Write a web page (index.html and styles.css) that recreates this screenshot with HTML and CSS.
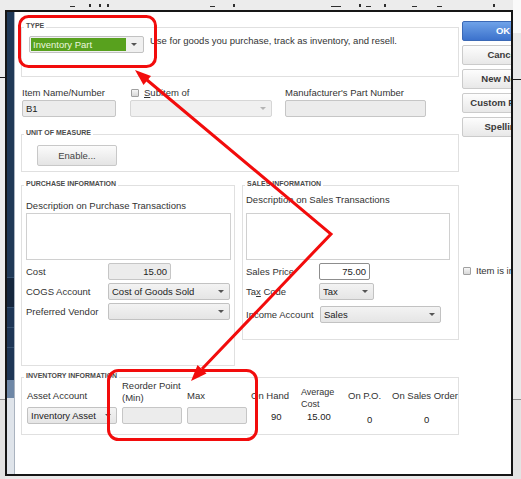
FILE: index.html
```html
<!DOCTYPE html>
<html lang="en">
<head>
  <meta charset="UTF-8" />
  <meta name="viewport" content="width=device-width, initial-scale=1.0"/>
  <title>Edit Item</title>
  <link rel="stylesheet" href="styles.css">
</head>
<body>
  <div class="screen">
    <!-- bits of the window behind, cut off at the top -->
    <div class="edge-top">
      <i class="u"></i><i class="c"></i><i class="c"></i><i class="c"></i><i class="u"></i><i class="c"></i><i class="u wide"></i><i class="c"></i><i class="u"></i><i class="c"></i><i class="u"></i><i class="u"></i><i class="c"></i>
    </div>
    <div class="edge-left"></div>

    <div class="frame">
      <div class="nav-strip"></div>
      <div class="dialog">
        <div class="form">

          <fieldset class="group group-type">
            <legend>TYPE</legend>
            <div class="type-row">
              <div class="combo combo-type"><span class="combo-value">Inventory Part</span><span class="combo-arrow"></span></div>
              <p class="type-desc">Use for goods you purchase, track as inventory, and resell.</p>
            </div>
          </fieldset>

          <div class="item-row">
            <div class="col-name">
              <div class="cap">Item Name/Number</div>
              <div class="input">B1</div>
            </div>
            <div class="col-sub">
              <div class="cap"><span class="check"></span><u>S</u>ubitem of</div>
              <div class="combo is-disabled"><span class="combo-value"></span><span class="combo-arrow"></span></div>
            </div>
            <div class="col-mpn">
              <div class="cap">Manufacturer's Part Number</div>
              <div class="input"></div>
            </div>
          </div>

          <fieldset class="group group-uom">
            <legend>UNIT OF MEASURE</legend>
            <button class="plain-btn">Enable...</button>
          </fieldset>

          <div class="info-row">
            <fieldset class="group group-purchase">
              <legend>PURCHASE INFORMATION</legend>
              <div class="desc-cap">Description on Purchase Transactions</div>
              <div class="textbox"></div>
              <div class="frow">
                <span class="flabel">Cost</span>
                <div class="input num w-cost">15.00</div>
              </div>
              <div class="frow">
                <span class="flabel">COGS Account</span>
                <div class="combo w-cogs"><span class="combo-value">Cost of Goods Sold</span><span class="combo-arrow"></span></div>
              </div>
              <div class="frow">
                <span class="flabel">Preferred Vendor</span>
                <div class="combo w-vendor"><span class="combo-value"></span><span class="combo-arrow"></span></div>
              </div>
            </fieldset>

            <fieldset class="group group-sales">
              <legend>SALES INFORMATION</legend>
              <div class="desc-cap">Description on Sales Transactions</div>
              <div class="textbox"></div>
              <div class="frow">
                <span class="flabel">Sales Price</span>
                <div class="input num plain w-price">75.00</div>
              </div>
              <div class="frow">
                <span class="flabel">Ta<u>x</u> Code</span>
                <div class="combo w-tax"><span class="combo-value">Tax</span><span class="combo-arrow"></span></div>
              </div>
              <div class="frow tall">
                <span class="flabel">Income Account</span>
                <div class="combo w-income"><span class="combo-value">Sales</span><span class="combo-arrow"></span></div>
              </div>
            </fieldset>
          </div>

          <fieldset class="group group-inv">
            <legend>INVENTORY INFORMATION</legend>
            <div class="inv-row">
              <div class="inv-col inv-asset">
                <div class="inv-head"><span class="one">Asset Account</span></div>
                <div class="combo"><span class="combo-value">Inventory Asset</span><span class="combo-arrow"></span></div>
              </div>
              <div class="inv-col inv-min">
                <div class="inv-head"><span>Reorder Point<br>(Min)</span></div>
                <div class="input"></div>
              </div>
              <div class="inv-col inv-max">
                <div class="inv-head"><span class="one">Max</span></div>
                <div class="input"></div>
              </div>
              <div class="inv-col inv-hand">
                <div class="inv-head"><span class="one">On Hand</span></div>
                <div class="inv-val">90</div>
              </div>
              <div class="inv-col inv-avg">
                <div class="inv-head"><span class="avg">Average<br>Cost</span></div>
                <div class="inv-val">15.00</div>
              </div>
              <div class="inv-col inv-po">
                <div class="inv-head"><span class="one">On P.O.</span></div>
                <div class="inv-val low">0</div>
              </div>
              <div class="inv-col inv-so">
                <div class="inv-head"><span class="one">On Sales Order</span></div>
                <div class="inv-val low">0</div>
              </div>
            </div>
          </fieldset>
        </div>

        <div class="actions">
          <div class="btn btn-ok">OK</div>
          <div class="btn">Cancel</div>
          <div class="btn">New Note</div>
          <div class="btn">Custom Fields</div>
          <div class="btn">Spelling</div>
          <div class="inactive"><span class="check"></span>Item is inactive</div>
        </div>
      </div>
    </div>

    <div class="edge-right"></div>

    <!-- red call-outs drawn over the dialog -->
    <svg class="marks" width="521" height="479" viewBox="0 0 521 479">
      <rect x="19.5" y="16.5" width="136" height="50" rx="9" />
      <rect x="108.5" y="370.5" width="148" height="69" rx="10" />
      <polyline points="147,80 331,234 202,369" />
      <polygon points="135,70 151,76 143.5,85" />
      <polygon points="191,381 206.5,373.5 197.5,365" />
    </svg>
  </div>
</body>
</html>
```

FILE: styles.css
```css
* { box-sizing: border-box; }

body {
  margin: 0;
  font-family: "Liberation Sans", Arial, sans-serif;
  font-size: 9.5px;
  color: #333;
  background: #e9e9e9;
}

.screen {
  position: relative;
  width: 521px; height: 479px;
  overflow: hidden;
  display: grid;
  grid-template-columns: 5px 508px 8px;
  grid-template-rows: 10px 466px 3px;
  background: #e9e9e9;
}

/* window behind */
.edge-top {
  grid-column: 1 / 3; grid-row: 1;
  background: #ececec;
  display: flex;
  align-items: flex-start;
}
.edge-top i { display: block; flex: none; background: #2e2e2e; }
.edge-top .u { width: 5px; height: 1px; margin-top: 6px; }
.edge-top .u.wide { width: 10px; }
.edge-top .c { width: 2px; height: 3px; margin-top: 4px; }
.edge-top i:nth-child(1) { margin-left: 70px; }
.edge-top i:nth-child(2) { margin-left: 14px; }
.edge-top i:nth-child(3) { margin-left: 8px; }
.edge-top i:nth-child(4) { margin-left: 6px; }
.edge-top i:nth-child(5) { margin-left: 101px; }
.edge-top i:nth-child(6) { margin-left: 18px; }
.edge-top i:nth-child(7) { margin-left: 96px; }
.edge-top i:nth-child(8) { margin-left: 18px; }
.edge-top i:nth-child(9) { margin-left: 5px; }
.edge-top i:nth-child(10) { margin-left: 13px; }
.edge-top i:nth-child(11) { margin-left: 26px; }
.edge-top i:nth-child(12) { margin-left: 20px; }
.edge-top i:nth-child(13) { margin-left: 51px; }

.edge-left {
  grid-column: 1; grid-row: 2 / 4;
  background: linear-gradient(#ececec 0 67px, #1a1a1a 67px 68px, #ececec 68px 389px, #8f8f8f 389px 390px, #e2e2e2 390px);
}
.edge-right {
  grid-column: 3; grid-row: 1 / 4;
  background: linear-gradient(#fafafa 0 33px, #e9e9e9 33px 79px, #1a1a1a 79px 80px, #e9e9e9 80px 399px, #8f8f8f 399px 400px, #e4e4e4 400px);
}

.frame {
  grid-column: 2; grid-row: 2;
  border: 2px solid #161616;
  display: flex;
  overflow: hidden;
  background: #fff;
}

.nav-strip {
  flex: none;
  width: 7px;
  background: linear-gradient(#203957 0 265px, #34506f 265px 266px, #15263d 266px 295px,
    #34506f 295px 296px, #1e3656 296px 315px, #34506f 315px 316px, #1e3656 316px 335px,
    #34506f 335px 336px, #1e3656 336px 368px, #6e87a6 368px 386px, #dfe4ea 386px);
}

.dialog {
  flex: 1;
  min-width: 0;
  border-left: 1px solid #aab3bf;
  display: flex;
  align-items: flex-start;
  padding: 9px 0 0 6px;
  overflow: hidden;
}

.form {
  flex: none;
  width: 438px;
  display: flex;
  flex-direction: column;
}

/* group boxes */
.group {
  margin: 0;
  padding: 0 0 0 2px;
  border: 1px solid #e0e0e0;
  min-width: 0;
}
.group legend {
  padding: 0 2px 3px;
  font-size: 7px;
  line-height: 10px;
  font-weight: bold;
  color: #4b4b4b;
}

/* controls */
.input {
  height: 17px;
  border: 1px solid #c6c6c6;
  border-radius: 2px;
  background: #ececec;
  padding: 0 3px;
  line-height: 15px;
  color: #222;
  white-space: nowrap;
}
.input.num { text-align: right; }
.input.plain { background: #fff; border-color: #8d8d8d; }

.combo {
  display: flex;
  align-items: center;
  height: 17px;
  border: 1px solid #c2c2c2;
  border-radius: 2px;
  background: linear-gradient(#f3f3f3, #e5e5e5);
  padding-left: 3px;
}
.combo-value {
  flex: 1;
  white-space: nowrap;
  overflow: hidden;
  color: #222;
  line-height: 15px;
}
.combo-arrow {
  flex: none;
  width: 16px;
  height: 100%;
  display: flex;
  align-items: center;
  justify-content: center;
}
.combo-arrow::before {
  content: "";
  border-left: 3px solid transparent;
  border-right: 3px solid transparent;
  border-top: 3px solid #555;
}
.combo.is-disabled { background: #f0f0f0; border-color: #d6d6d6; }
.combo.is-disabled .combo-arrow::before { border-top-color: #b4b4b4; }

.check {
  flex: none;
  width: 8px; height: 8px;
  border: 1px solid #a0a0a0;
  border-radius: 1px;
  background: linear-gradient(#f6f6f6, #d8d8d8);
  margin: 0 5px 0 1px;
}

/* type */
.group-type { padding-top: 2px; padding-bottom: 23px; }
.type-row { display: flex; align-items: flex-start; margin-left: 5px; }
.combo-type { width: 115px; padding: 1px; background: #f0f0f0; }
.combo-type .combo-value {
  height: 100%;
  background: #58a11e;
  color: #eaf6df;
  padding-left: 2px;
  line-height: 13px;
}
.type-desc { margin: -1px 0 0 6px; line-height: 12px; }

/* name row */
.item-row { display: flex; margin: 10px 0 0 1px; }
.col-name { width: 94px; }
.col-sub { width: 142px; margin-left: 14px; }
.col-mpn { width: 141px; margin-left: 13px; }
.cap {
  display: flex;
  align-items: center;
  line-height: 12px;
  margin-bottom: 1px;
  white-space: nowrap;
}

/* unit of measure */
.group-uom { margin-top: 11px; padding-top: 4px; padding-bottom: 5px; }
.plain-btn {
  display: block;
  width: 80px; height: 21px;
  margin-left: 13px;
  padding: 0;
  border: 1px solid #c8c8c8;
  border-radius: 2px;
  background: linear-gradient(#fbfbfb, #e4e4e4);
  font: inherit;
  color: #444;
}

/* purchase / sales */
.info-row { display: flex; align-items: flex-start; gap: 7px; margin-top: 7px; }
.group-purchase { width: 214px; padding-bottom: 45px; }
.group-sales { width: 217px; padding-bottom: 16px; }

.desc-cap { line-height: 12px; white-space: nowrap; }
.group-purchase .desc-cap { margin: 8px 0 1px 2px; }
.group-sales .desc-cap { margin: 2px 0 7px 1px; }

.textbox { height: 47px; margin-bottom: 1px; border: 1px solid #d0d0d0; background: #fff; }
.group-purchase .textbox { width: 205px; margin-left: 2px; }
.group-sales .textbox { width: 204px; margin-left: 1px; }

.frow { display: flex; align-items: center; margin-top: 3px; }
.frow.tall { margin-top: 6px; }
.flabel { flex: none; white-space: nowrap; }
.group-purchase .flabel { width: 82px; margin-left: 2px; }
.group-sales .flabel { width: 73px; margin-left: 1px; }

.w-cost { width: 63px; }
.w-cogs, .w-vendor { width: 122px; }
.w-price { width: 51px; }
.w-tax { width: 55px; }
.w-income { width: 121px; margin-left: 1px; }

/* inventory */
.group-inv { margin-top: 5px; padding-bottom: 8px; }
.inv-row { display: flex; align-items: flex-start; margin-top: -4px; }
.inv-col { flex: none; }
.inv-head {
  height: 24px;
  display: flex;
  flex-direction: column;
  justify-content: flex-end;
  line-height: 12px;
  white-space: nowrap;
}
.inv-head .one { margin-bottom: 2px; }
.inv-head .avg { margin-bottom: -6px; font-size: 9px; }
.inv-col .input, .inv-col .combo { margin-top: 3px; }
.inv-val { line-height: 12px; margin-top: 7px; color: #222; }
.inv-val.low { margin-top: 10px; }

.inv-asset { width: 90px; margin-left: 3px; }
.inv-min { width: 60px; margin-left: 5px; }
.inv-max { width: 60px; margin-left: 5px; }
.inv-hand { width: 50px; margin-left: 4px; }
.inv-avg { width: 47px; }
.inv-po { width: 44px; }
.inv-so { width: 66px; }
.inv-hand .inv-val { padding-left: 20px; }
.inv-avg .inv-val { padding-left: 6px; }
.inv-po .inv-val { padding-left: 19px; }
.inv-so .inv-val { padding-left: 32px; }

/* buttons on the right */
.actions {
  flex: none;
  width: 82px;
  margin-left: 3px;
  display: flex;
  flex-direction: column;
}
.btn {
  height: 20px;
  margin-bottom: 4px;
  border: 1px solid #cbcbcb;
  border-radius: 2px;
  background: linear-gradient(#fdfdfd, #e8e8e8);
  font-weight: bold;
  color: #3a3a3a;
  text-align: center;
  line-height: 18px;
  white-space: nowrap;
}
.btn-ok {
  background: linear-gradient(#6fa2e8, #3c72cc);
  border-color: #3b69b6;
  color: #fff;
}
.inactive {
  display: flex;
  align-items: center;
  margin-top: 124px;
  line-height: 12px;
  white-space: nowrap;
}

/* call-outs */
.marks {
  position: absolute;
  left: 0; top: 0;
  pointer-events: none;
}
.marks rect, .marks polyline {
  fill: none;
  stroke: #f20c0c;
  stroke-width: 3;
}
.marks polygon { fill: #f20c0c; }
```
